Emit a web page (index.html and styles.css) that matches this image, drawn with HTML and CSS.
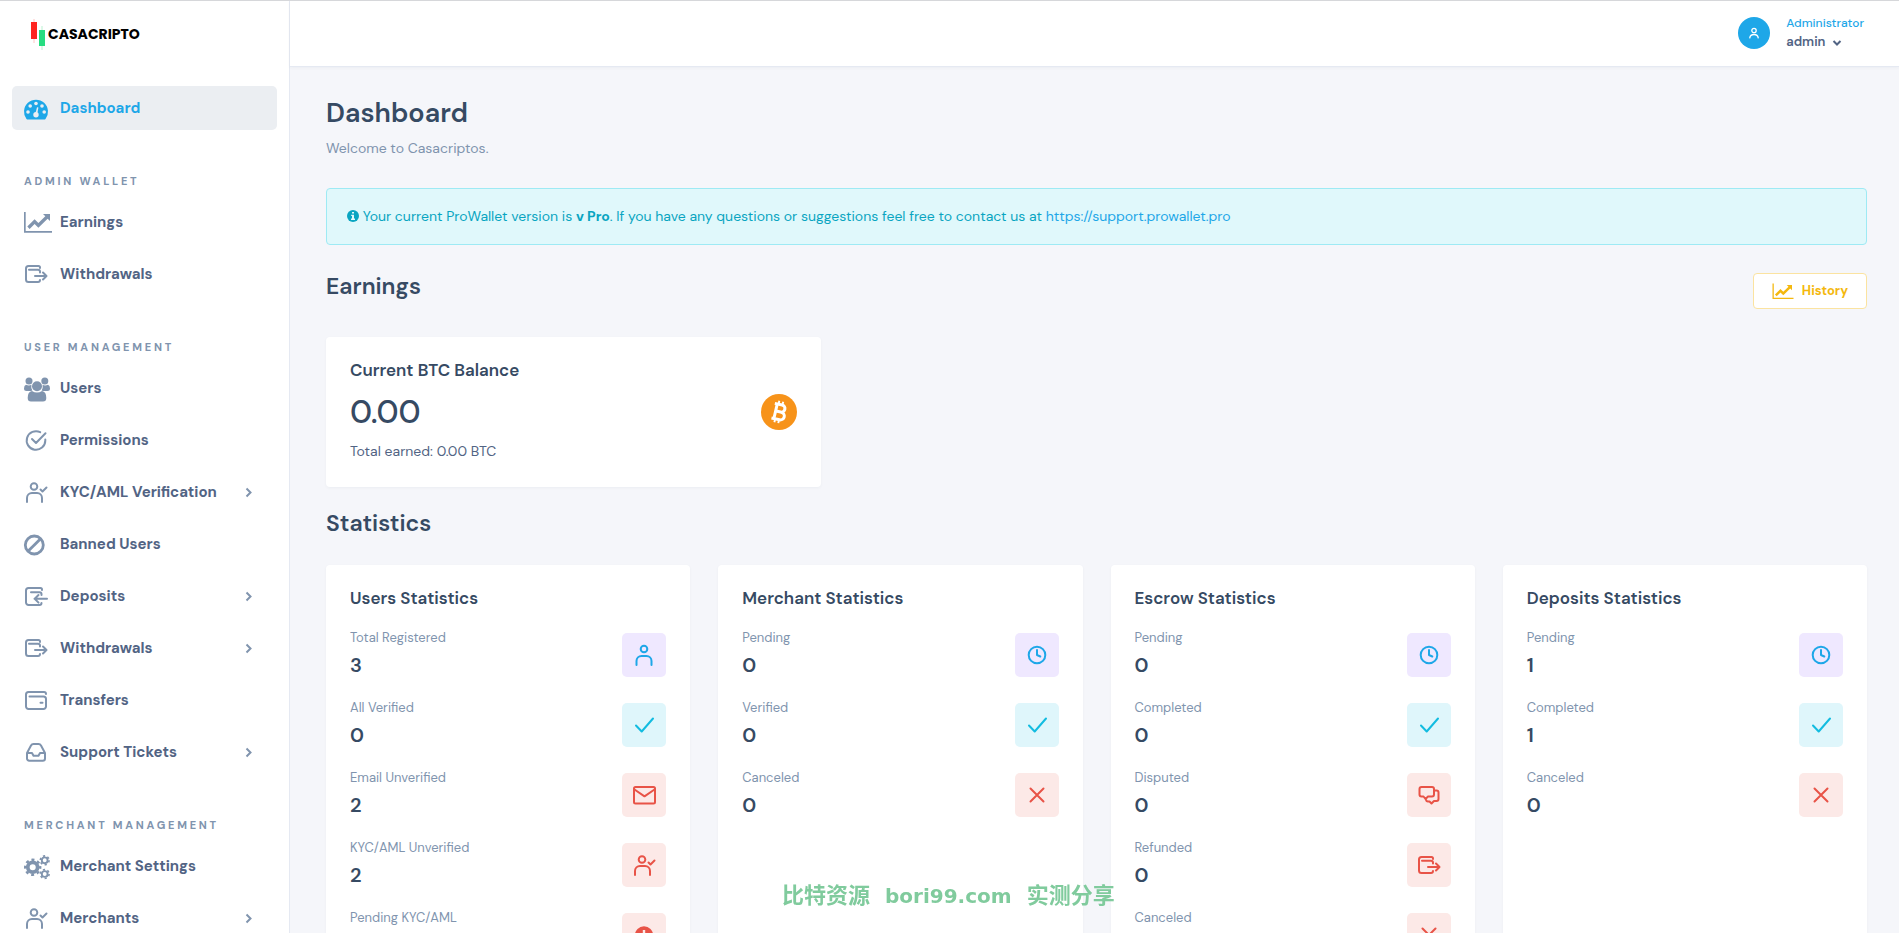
FILE: index.html
```html
<!DOCTYPE html>
<html lang="en">
<head>
  <meta charset="UTF-8" />
  <title>Dashboard - Casacripto</title>
  <meta name="viewport" content="width=device-width, initial-scale=1.0" />
  <link rel="stylesheet" href="styles.css">
</head>
<body>
  <!-- icon set -->
  <svg class="sprite" aria-hidden="true">
    <symbol id="i-gauge">
      <path fill="currentColor" d="M2.500 23A12 12 0 1 1 21.500 23Q21 23.500 20 23.500H4Q3 23.500 2.500 23z"/>
      <g class="knock">
        <circle cx="4" cy="16" r="1.800"/><circle cx="6.200" cy="10" r="1.800"/><circle cx="12" cy="7.500" r="1.800"/>
        <circle cx="18" cy="10" r="1.800"/><circle cx="20.200" cy="16" r="1.800"/><circle cx="12" cy="18.800" r="2.700"/>
        <path d="M11.400 17.500L13 11.200l1.400.3-1.200 6.500z"/>
      </g>
    </symbol>
    <symbol id="i-chart">
      <path fill="currentColor" d="M0 2h1.700v19H28v1.700H0zM19 4h7v7l-2.400-2.300-9.200 9-3.800-3.800-5 5-2.300-2.300 7.300-7.300 3.800 3.800 6.900-6.800z"/>
    </symbol>
    <symbol id="i-wallet-out">
      <path class="line" d="M16 6V5.500C16 4.500 15.300 4 14.500 4H4.500A2.500 2.500 0 0 0 2 6.500v11A2.500 2.500 0 0 0 4.500 20H14a2 2 0 0 0 2-2M5 7.800h9a2 2 0 0 1 2 2v.7M11 14h11M19 10.500l3.500 3.500-3.500 3.500"/>
    </symbol>
    <symbol id="i-wallet-in">
      <path class="line" d="M18 6V5.800C18 4.600 17.500 4 16.500 4h-12A2.500 2.500 0 0 0 2 6.500v12A2.500 2.500 0 0 0 4.500 21h11a2 2 0 0 0 2-2M7 8.200h8.500a2 2 0 0 1 2 2v.7M23 14.800H10.500M14.500 11l-3.800 3.800 3.800 3.800"/>
    </symbol>
    <symbol id="i-wallet">
      <path class="line" d="M22 6C22 4.700 21.500 4 20 4H4.500A2.500 2.500 0 0 0 2 6.500v12A2.500 2.500 0 0 0 4.500 21h15a2.500 2.500 0 0 0 2.500-2.500V11a2.500 2.500 0 0 0-2.500-2.500H5.500M16.500 14.800h2"/>
    </symbol>
    <symbol id="i-users">
      <g fill="currentColor">
        <circle cx="5" cy="5" r="3.500"/><circle cx="20.800" cy="5" r="3.500"/>
        <path d="M2 8.800q3 1.200 5.400 0-.6 3.600 1 5.800-.6.400-1.400.4H2.500Q0 15 0 12.500 0 9.500 2 8.800zM24 8.800q-3 1.200-5.400 0 .6 3.600-1 5.800.6.400 1.400.4h4.500Q26 15 26 12.500 26 9.500 24 8.800z"/>
        <circle cx="13" cy="10.300" r="5"/>
        <path d="M8 15q5 3.200 10 0 4.300.6 4.300 7 0 3.500-3.300 3.500H7q-3.300 0-3.300-3.500 0-6.400 4.300-7z"/>
      </g>
    </symbol>
    <symbol id="i-check-circle">
      <path class="line" d="M21.300 11.500v1A9.300 9.300 0 1 1 16.200 4.200M8 11l4 4L21.500 5.200"/>
    </symbol>
    <symbol id="i-user-check">
      <circle class="line" cx="10" cy="6.500" r="3.300"/>
      <path class="line" d="M3 22v-4a5 5 0 0 1 5-5h5a5 5 0 0 1 5 5v4M16.500 9.500l2 2 4-4"/>
    </symbol>
    <symbol id="i-user">
      <circle class="line" cx="12" cy="6" r="3.300"/>
      <path class="line" d="M4.500 22v-4a5 5 0 0 1 5-5h5a5 5 0 0 1 5 5v4"/>
    </symbol>
    <symbol id="i-ban">
      <circle cx="10.300" cy="13" r="9" fill="none" stroke="currentColor" stroke-width="2.800"/>
      <path d="M4 19.300L16.600 6.700" stroke="currentColor" stroke-width="2.800"/>
    </symbol>
    <symbol id="i-inbox">
      <path class="line" d="M3 13l4-7.500Q7.800 4 9.500 4h5q1.700 0 2.500 1.500L21 13v5.500a2.200 2.200 0 0 1-2.200 2.200H5.200A2.200 2.200 0 0 1 3 18.500zM3 13h5l1.500 2.800h5L16 13h5"/>
    </symbol>
    <symbol id="i-cogs">
      <g fill="none" stroke="currentColor">
        <circle cx="8.700" cy="13.300" r="4.900" stroke-width="3.700"/>
        <circle cx="8.700" cy="13.300" r="7.500" stroke-width="2.400" stroke-dasharray="3 2.890" stroke-dashoffset="1.500"/>
        <circle cx="20.700" cy="6.300" r="2.900" stroke-width="1.900"/>
        <circle cx="20.700" cy="6.300" r="4.400" stroke-width="1.600" stroke-dasharray="2.200 2.400"/>
        <circle cx="20.700" cy="20" r="2.900" stroke-width="1.900"/>
        <circle cx="20.700" cy="20" r="4.400" stroke-width="1.600" stroke-dasharray="2.200 2.400"/>
      </g>
    </symbol>
    <symbol id="i-check"><path class="line" d="M4 12.500l5.700 6L21 5.500"/></symbol>
    <symbol id="i-cross"><path class="line" d="M5.500 5.500l13 13M18.500 5.500l-13 13"/></symbol>
    <symbol id="i-clock">
      <circle class="line" cx="12" cy="12" r="8.300"/>
      <path class="line" d="M12 7v5l3.300 1.500"/>
    </symbol>
    <symbol id="i-mail">
      <rect class="line" x="2" y="4" width="21" height="16.500" rx="1.500"/>
      <path class="line" d="M2.500 6.500l10 6.800 10-6.800"/>
    </symbol>
    <symbol id="i-chat">
      <path class="line" d="M4.500 4h10.500q2 0 2 2v5.500q0 2-2 2h-4L8.500 16 6.500 13.500h-2q-2 0-2-2V6q0-2 2-2zM17.500 7.500h2q2 0 2 2v6.500q0 2-2 2h-2.500L14.500 20.500 12.500 18.500H11q-1.800 0-2-2"/>
    </symbol>
    <symbol id="i-alert">
      <circle cx="12" cy="12.500" r="9.200" fill="currentColor"/>
      <path class="knock-line" d="M12 7v7M12 16.500v2"/>
    </symbol>
    <symbol id="i-next"><path class="bold-line" d="M3.500 2.500L7.500 6.500l-4 4"/></symbol>
  </svg>

  <div class="app">
    <aside class="sidebar">
      <a class="brand" href="#">
        <svg width="16" height="34" aria-hidden="true">
          <path d="M4 2v24" stroke="#ffc4c4" stroke-width="1"/><path fill="#ff2420" d="M1 5h6v17H1z"/>
          <path d="M12 9v24" stroke="#b9f2d1" stroke-width="1"/><path fill="#27dd81" d="M9 13h6v16H9z"/>
        </svg>
        <span>CASACRIPTO</span>
      </a>
      <nav class="menu">
        <a class="menu-link active" href="#"><svg class="icon"><use href="#i-gauge"/></svg><span>Dashboard</span></a>

        <h6 class="menu-heading">Admin Wallet</h6>
        <a class="menu-link" href="#"><svg class="icon"><use href="#i-chart"/></svg><span>Earnings</span></a>
        <a class="menu-link" href="#"><svg class="icon"><use href="#i-wallet-out"/></svg><span>Withdrawals</span></a>

        <h6 class="menu-heading">User Management</h6>
        <a class="menu-link" href="#"><svg class="icon"><use href="#i-users"/></svg><span>Users</span></a>
        <a class="menu-link" href="#"><svg class="icon"><use href="#i-check-circle"/></svg><span>Permissions</span></a>
        <a class="menu-link" href="#"><svg class="icon"><use href="#i-user-check"/></svg><span>KYC/AML Verification</span><svg class="arrow"><use href="#i-next"/></svg></a>
        <a class="menu-link" href="#"><svg class="icon"><use href="#i-ban"/></svg><span>Banned Users</span></a>
        <a class="menu-link" href="#"><svg class="icon"><use href="#i-wallet-in"/></svg><span>Deposits</span><svg class="arrow"><use href="#i-next"/></svg></a>
        <a class="menu-link" href="#"><svg class="icon"><use href="#i-wallet-out"/></svg><span>Withdrawals</span><svg class="arrow"><use href="#i-next"/></svg></a>
        <a class="menu-link" href="#"><svg class="icon"><use href="#i-wallet"/></svg><span>Transfers</span></a>
        <a class="menu-link" href="#"><svg class="icon"><use href="#i-inbox"/></svg><span>Support Tickets</span><svg class="arrow"><use href="#i-next"/></svg></a>

        <h6 class="menu-heading">Merchant Management</h6>
        <a class="menu-link" href="#"><svg class="icon"><use href="#i-cogs"/></svg><span>Merchant Settings</span></a>
        <a class="menu-link" href="#"><svg class="icon"><use href="#i-user-check"/></svg><span>Merchants</span><svg class="arrow"><use href="#i-next"/></svg></a>
      </nav>
    </aside>

    <div class="page">
      <header class="topbar">
        <button class="user" type="button">
          <span class="avatar">
            <svg width="12" height="12" viewBox="0 0 12 12" aria-hidden="true"><g fill="none" stroke="#fff" stroke-width="1.300" stroke-linecap="round"><circle cx="6" cy="3.500" r="2.200"/><path d="M1.800 10.800Q2.200 7.500 6 7.500t4.200 3.300"/></g></svg>
          </span>
          <span class="user-info">
            <span class="user-role">Administrator</span>
            <span class="user-name">admin
              <svg width="10" height="6" viewBox="0 0 10 6" aria-hidden="true"><path class="bold-line" d="M1.500 1L5 4.500 8.500 1"/></svg>
            </span>
          </span>
        </button>
      </header>

      <main class="content">
        <h1 class="page-title">Dashboard</h1>
        <p class="page-sub">Welcome to Casacriptos.</p>

        <div class="alert">
          <svg width="12" height="12" viewBox="0 0 12 12" aria-hidden="true"><circle cx="6" cy="6" r="6" fill="#09a5c1"/><path fill="#e0f8fb" d="M5 2h2v1.600H5zM4.200 4.700H7v3.800h1V10H4V8.500h1V6H4.200z"/></svg>
          Your current ProWallet version is <b>v Pro</b>. If you have any questions or suggestions feel free to contact us at <a href="#">https://support.prowallet.pro</a>
        </div>

        <div class="section-head">
          <h2 class="section-title">Earnings</h2>
          <button class="btn-history" type="button">
            <svg width="22" height="18" viewBox="0 0 28 24" aria-hidden="true"><use href="#i-chart"/></svg>
            History
          </button>
        </div>

        <div class="grid-3">
          <div class="card balance">
            <h3 class="card-title">Current BTC Balance</h3>
            <div class="balance-row">
              <span class="amount">0.00</span>
              <svg width="36" height="36" viewBox="0 0 36 36" aria-label="BTC">
                <circle cx="18" cy="18" r="18" fill="#f7931a"/>
                <g transform="rotate(13 18 18)" fill="none" stroke="#fff">
                  <path stroke-width="3" d="M14.500 10v16M12 10.500h7.500a3.600 3.600 0 0 1 0 7.200H15M19.500 17.700h.8a3.900 3.900 0 0 1 0 7.800H12"/>
                  <path stroke-width="1.900" d="M15.800 7v4M19.800 7v4M15.800 25v4M19.800 25v4"/>
                </g>
              </svg>
            </div>
            <p class="earned">Total earned: 0.00 BTC</p>
          </div>
        </div>

        <h2 class="section-title stats-title">Statistics</h2>

        <div class="grid-4">
          <div class="card">
            <h3 class="card-title">Users Statistics</h3>
            <div class="stat"><div><div class="label">Total Registered</div><div class="value">3</div></div><span class="badge primary"><svg><use href="#i-user"/></svg></span></div>
            <div class="stat"><div><div class="label">All Verified</div><div class="value">0</div></div><span class="badge info"><svg><use href="#i-check"/></svg></span></div>
            <div class="stat"><div><div class="label">Email Unverified</div><div class="value">2</div></div><span class="badge danger"><svg><use href="#i-mail"/></svg></span></div>
            <div class="stat"><div><div class="label">KYC/AML Unverified</div><div class="value">2</div></div><span class="badge danger"><svg><use href="#i-user-check"/></svg></span></div>
            <div class="stat"><div><div class="label">Pending KYC/AML</div></div><span class="badge danger"><svg><use href="#i-alert"/></svg></span></div>
          </div>

          <div class="card">
            <h3 class="card-title">Merchant Statistics</h3>
            <div class="stat"><div><div class="label">Pending</div><div class="value">0</div></div><span class="badge primary"><svg><use href="#i-clock"/></svg></span></div>
            <div class="stat"><div><div class="label">Verified</div><div class="value">0</div></div><span class="badge info"><svg><use href="#i-check"/></svg></span></div>
            <div class="stat"><div><div class="label">Canceled</div><div class="value">0</div></div><span class="badge danger"><svg><use href="#i-cross"/></svg></span></div>
          </div>

          <div class="card">
            <h3 class="card-title">Escrow Statistics</h3>
            <div class="stat"><div><div class="label">Pending</div><div class="value">0</div></div><span class="badge primary"><svg><use href="#i-clock"/></svg></span></div>
            <div class="stat"><div><div class="label">Completed</div><div class="value">0</div></div><span class="badge info"><svg><use href="#i-check"/></svg></span></div>
            <div class="stat"><div><div class="label">Disputed</div><div class="value">0</div></div><span class="badge danger"><svg><use href="#i-chat"/></svg></span></div>
            <div class="stat"><div><div class="label">Refunded</div><div class="value">0</div></div><span class="badge danger"><svg><use href="#i-wallet-out"/></svg></span></div>
            <div class="stat"><div><div class="label">Canceled</div></div><span class="badge danger"><svg><use href="#i-cross"/></svg></span></div>
          </div>

          <div class="card">
            <h3 class="card-title">Deposits Statistics</h3>
            <div class="stat"><div><div class="label">Pending</div><div class="value">1</div></div><span class="badge primary"><svg><use href="#i-clock"/></svg></span></div>
            <div class="stat"><div><div class="label">Completed</div><div class="value">1</div></div><span class="badge info"><svg><use href="#i-check"/></svg></span></div>
            <div class="stat"><div><div class="label">Canceled</div><div class="value">0</div></div><span class="badge danger"><svg><use href="#i-cross"/></svg></span></div>
          </div>
        </div>
      </main>
    </div>
  </div>

  <div class="watermark"><span>比特资源</span><span class="site">bori99.com</span><span>实测分享</span></div>
</body>
</html>
```
FILE: styles.css
```css
* {
  box-sizing: border-box;
}

body {
  margin: 0;
  background: #f5f6fa;
  color: #526484;
  font-family: "DM Sans", Inter, sans-serif;
  font-size: 14px;
  line-height: 20px;
}

h1, h2, h3, h6, p {
  margin: 0;
}

a {
  color: #1ea7e8;
  text-decoration: none;
}

button {
  font: inherit;
  cursor: pointer;
}

svg {
  flex-shrink: 0;
  overflow: visible;
}

symbol {
  overflow: visible;
}

.sprite {
  position: absolute;
  width: 0;
  height: 0;
}

.line {
  fill: none;
  stroke: currentColor;
  stroke-width: 2;
  stroke-linecap: round;
  stroke-linejoin: round;
}

.bold-line {
  fill: none;
  stroke: currentColor;
  stroke-width: 2;
}

.knock {
  fill: #ebeef2;
}

.knock-line {
  stroke: #fce9e7;
  stroke-width: 2.4;
}

.app {
  display: flex;
  height: 100vh;
  overflow: hidden;
  border-top: 1px solid #d6d7da;
}

/* sidebar */
.sidebar {
  flex: 0 0 290px;
  background: #fff;
  border-right: 1px solid #e5e9f2;
  overflow: hidden;
}

.brand {
  display: flex;
  align-items: center;
  gap: 2px;
  height: 65px;
  padding-left: 30px;
  color: #000;
  font-family: Poppins, "DM Sans", Inter, sans-serif;
  font-size: 14px;
  font-weight: 700;
}

.menu {
  padding: 20px 12px;
}

.menu-link {
  display: flex;
  align-items: center;
  height: 44px;
  margin-bottom: 8px;
  padding: 0 22px 0 12px;
  border-radius: 5px;
  color: #526484;
  font-size: 15px;
  font-weight: 700;
}

.menu-link.active {
  background: #ebeef2;
  color: #1ea7e8;
}

.icon {
  width: 28px;
  height: 24px;
  margin-right: 8px;
  color: #8094ae;
}

.active .icon {
  color: #1ea7e8;
}

.arrow {
  width: 12px;
  height: 13px;
  margin-left: auto;
  color: #8094ae;
}

.menu-heading {
  padding: 36px 12px 12px;
  color: #8094ae;
  font-size: 11px;
  line-height: 14px;
  font-weight: 700;
  letter-spacing: 0.25em;
  text-transform: uppercase;
}

/* header */
.page {
  flex: 1;
  min-width: 0;
}

.topbar {
  display: flex;
  justify-content: flex-end;
  height: 66px;
  padding: 0 32px;
  background: #fff;
  border-bottom: 1px solid #e5e9f2;
  box-shadow: 0 1px 3px rgba(54, 74, 99, 0.05);
}

.user {
  display: flex;
  align-items: center;
  gap: 16px;
  padding: 0 3px 2px 0;
  border: none;
  background: none;
  text-align: left;
}

.avatar {
  display: flex;
  align-items: center;
  justify-content: center;
  width: 32px;
  height: 32px;
  border-radius: 50%;
  background: #1ea7e8;
}

.user-info {
  display: flex;
  flex-direction: column;
}

.user-role {
  color: #1ea7e8;
  font-size: 12px;
  line-height: 18px;
  font-weight: 500;
}

.user-name {
  color: #526484;
  font-size: 13px;
  font-weight: 600;
}

.user-name svg {
  margin-left: 3px;
}

/* content */
.content {
  padding: 28px 32px 28px 36px;
}

.page-title {
  color: #364a63;
  font-size: 27px;
  line-height: 36px;
  font-weight: 600;
}

.page-sub {
  margin-top: 6px;
  color: #8094ae;
  line-height: 23px;
}

.alert {
  margin-top: 28px;
  padding: 17px 20px 18px;
  border: 1px solid #9eeaf4;
  border-radius: 4px;
  background: #e0f8fb;
  color: #09a5c1;
}

.alert svg {
  vertical-align: -1px;
}

.section-head {
  display: flex;
  justify-content: space-between;
  margin-top: 28px;
}

.section-title {
  color: #364a63;
  font-size: 23px;
  line-height: 26px;
  font-weight: 600;
}

.btn-history {
  display: flex;
  align-items: center;
  gap: 8px;
  height: 36px;
  padding: 0 18px;
  border: 1px solid #fbe3a0;
  border-radius: 4px;
  background: #fff;
  color: #f4b80f;
  font-size: 13px;
  font-weight: 700;
}

.grid-3,
.grid-4 {
  display: grid;
  gap: 28px;
}

.grid-3 {
  grid-template-columns: repeat(3, 1fr);
  margin-top: 28px;
}

.grid-4 {
  grid-template-columns: repeat(4, 1fr);
  margin-top: 29px;
}

.card {
  padding: 22px 24px 24px;
  border-radius: 4px;
  background: #fff;
  box-shadow: 0 1px 3px rgba(54, 74, 99, 0.05);
}

.card-title {
  color: #364a63;
  font-size: 17px;
  line-height: 22px;
  font-weight: 600;
}

.balance {
  height: 150px;
}

.balance-row {
  display: flex;
  align-items: center;
  justify-content: space-between;
  margin-top: 12px;
}

.amount {
  color: #364a63;
  font-size: 32px;
  line-height: 38px;
  font-weight: 500;
}

.earned {
  margin-top: 10px;
}

.stats-title {
  margin-top: 23px;
}

.stat {
  display: flex;
  justify-content: space-between;
  align-items: flex-start;
  height: 50px;
  margin-top: 20px;
}

.card-title + .stat {
  margin-top: 21px;
}

.label {
  color: #8094ae;
  font-size: 13px;
  line-height: 16px;
}

.value {
  margin-top: 6px;
  color: #364a63;
  font-size: 20px;
  line-height: 26px;
  font-weight: 600;
}

.badge {
  display: flex;
  align-items: center;
  align-self: center;
  justify-content: center;
  width: 44px;
  height: 44px;
  border-radius: 5px;
}

.badge svg {
  width: 24px;
  height: 24px;
}

.primary {
  background: #efe8ff;
  color: #1ea7e8;
}

.info {
  background: #dff6fb;
  color: #12bce0;
}

.danger {
  background: #fce9e7;
  color: #e85347;
}

.watermark {
  position: fixed;
  left: 782px;
  bottom: 23px;
  display: flex;
  gap: 15px;
  color: #80cb9d;
  font-family: "DejaVu Sans", "Noto Sans CJK SC", sans-serif;
  font-size: 22px;
  line-height: 28px;
  font-weight: 700;
}

.watermark .site {
  font-size: 20px;
}
```
